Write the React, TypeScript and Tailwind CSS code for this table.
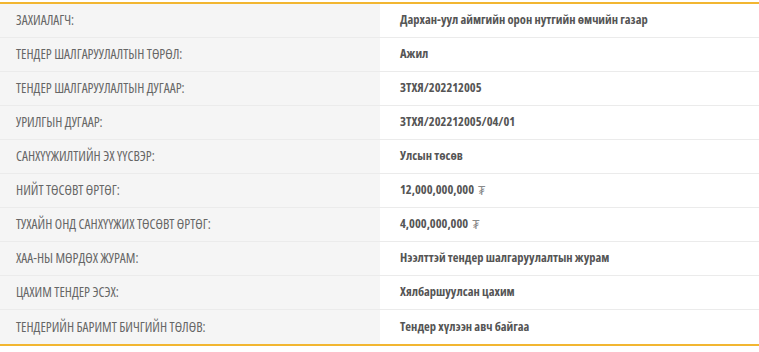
import React from "react";

const rows: [string, string, boolean?][] = [
  ["ЗАХИАЛАГЧ:", "Дархан-уул аймгийн орон нутгийн өмчийн газар"],
  ["ТЕНДЕР ШАЛГАРУУЛАЛТЫН ТӨРӨЛ:", "Ажил"],
  ["ТЕНДЕР ШАЛГАРУУЛАЛТЫН ДУГААР:", "ЗТХЯ/202212005"],
  ["УРИЛГЫН ДУГААР:", "ЗТХЯ/202212005/04/01"],
  ["САНХҮҮЖИЛТИЙН ЭХ ҮҮСВЭР:", "Улсын төсөв"],
  ["НИЙТ ТӨСӨВТ ӨРТӨГ:", "12,000,000,000", true],
  ["ТУХАЙН ОНД САНХҮҮЖИХ ТӨСӨВТ ӨРТӨГ:", "4,000,000,000", true],
  ["ХАА-НЫ МӨРДӨХ ЖУРАМ:", "Нээлттэй тендер шалгаруулалтын журам"],
  ["ЦАХИМ ТЕНДЕР ЭСЭХ:", "Хялбаршуулсан цахим"],
  ["ТЕНДЕРИЙН БАРИМТ БИЧГИЙН ТӨЛӨВ:", "Тендер хүлээн авч байгаа"],
];

export default function App() {
  return (
    <div className="w-[759px] h-[352px] bg-white pt-[2px]" style={{ fontFamily: '"Open Sans", sans-serif' }}>
      <div className="border-t-2 border-b-2 border-[#f2b631]">
        {rows.map(([k, v, money], i) => (
          <div key={i} className={`flex h-[34px] ${i < rows.length - 1 ? "border-b border-[#ebebeb]" : ""}`}>
            <div className="w-[380px] bg-[#f5f5f5] pl-4 flex items-center text-[13.5px] text-[#666666] [font-stretch:87%]">{k}</div>
            <div className="flex-1 bg-white pl-5 flex items-center text-[12.5px] font-bold text-[#555555] [font-stretch:75%]">
              {v}
              {money && <span className="ml-[4px] font-normal text-[#8a8a8a] text-[12px]">₮</span>}
            </div>
          </div>
        ))}
      </div>
    </div>
  );
}
